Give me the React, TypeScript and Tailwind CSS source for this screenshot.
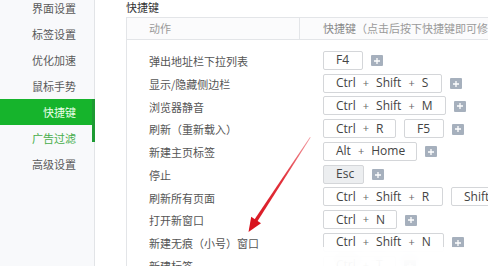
import React from 'react';

const cjk = "font-['Noto_Sans_CJK_SC','Noto_Sans',sans-serif]";
const latin = "font-['Open_Sans','Noto_Sans_CJK_SC',sans-serif]";

const menu = ['界面设置', '标签设置', '优化加速', '鼠标手势', '快捷键', '广告过滤', '高级设置'];

type Key = { parts: string[]; w: string; muted?: boolean };
type Row = { action: string; keys: Key[]; plus: boolean };

const rows: Row[] = [
  { action: '弹出地址栏下拉列表', keys: [{ parts: ['F4'], w: 'w-[40px]' }], plus: true },
  { action: '显示/隐藏侧边栏', keys: [{ parts: ['Ctrl', '+', 'Shift', '+', 'S'], w: 'w-[119px]' }], plus: true },
  { action: '浏览器静音', keys: [{ parts: ['Ctrl', '+', 'Shift', '+', 'M'], w: 'w-[123px]' }], plus: true },
  {
    action: '刷新（重新载入）',
    keys: [
      { parts: ['Ctrl', '+', 'R'], w: 'w-[73px]' },
      { parts: ['F5'], w: 'w-[40px]' },
    ],
    plus: true,
  },
  { action: '新建主页标签', keys: [{ parts: ['Alt', '+', 'Home'], w: 'w-[94px]' }], plus: true },
  { action: '停止', keys: [{ parts: ['Esc'], w: 'w-[41px]', muted: true }], plus: true },
  {
    action: '刷新所有页面',
    keys: [
      { parts: ['Ctrl', '+', 'Shift', '+', 'R'], w: 'w-[120px]' },
      { parts: ['Shift', '+', 'F5'], w: 'w-[100px]' },
    ],
    plus: false,
  },
  { action: '打开新窗口', keys: [{ parts: ['Ctrl', '+', 'N'], w: 'w-[74px]' }], plus: true },
  { action: '新建无痕（小号）窗口', keys: [{ parts: ['Ctrl', '+', 'Shift', '+', 'N'], w: 'w-[121px]' }], plus: true },
  { action: '新建标签', keys: [{ parts: ['Ctrl', '+', 'T'], w: 'w-[73px]' }], plus: true },
];

function PlusButton() {
  return (
    <div className="w-[12px] h-[11px] shrink-0 bg-[#a6b0bd] rounded-[1px] flex items-center justify-center mt-[1px]">
      <svg width="8" height="8" viewBox="0 0 8 8">
        <path d="M4 1v6M1 4h6" stroke="#ffffff" strokeWidth="1.3" />
      </svg>
    </div>
  );
}

function KeyBox({ k }: { k: Key }) {
  return (
    <div
      className={`${k.w} h-[19px] shrink-0 border border-[#d4d6d9] rounded-[2px] pl-[12px] flex items-center gap-[7px] text-[12px] text-[#444] ${latin} ${k.muted ? 'bg-[#eceef0]' : 'bg-white'}`}
    >
      {k.parts.map((p, i) => (
        <span key={i} className={p === '+' ? 'text-[11px] text-[#666]' : ''}>
          {p}
        </span>
      ))}
    </div>
  );
}

export default function App() {
  return (
    <div className="relative w-[488px] h-[266px] overflow-hidden bg-white flex">
      {/* sidebar */}
      <div className={`w-[95px] shrink-0 h-full bg-[#f8f9fb] border-r border-[#e2e4e7] ${cjk}`}>
        <div className="-mt-[5px]">
          {menu.map((m) => {
            const active = m === '快捷键';
            return (
              <div
                key={m}
                className={`relative h-[26px] flex items-center justify-end pr-[18px] text-[11px] ${
                  active ? 'bg-[#16b42c] text-[#eaffea]' : m === '广告过滤' ? 'text-[#47ad4a]' : 'text-[#5a5a5a]'
                }`}
              >
                {m}
                {active && <div className="absolute right-[-1px] top-0 w-[3px] h-[43px] bg-[#1d9b33]" />}
              </div>
            );
          })}
        </div>
      </div>

      {/* main */}
      <div className={`flex-1 pl-[31px] ${cjk}`}>
        <div className="h-[19px] -mt-[2px] flex items-center text-[11px] text-[#333]">快捷键</div>
        <div className="w-[420px] border border-[#e3e5e8]">
          <div className="h-[22px] flex bg-[#fbfbfc] border-b border-[#e3e5e8] text-[11px] text-[#9a9a9a]">
            <div className="w-[173px] shrink-0 border-r border-[#e3e5e8] pl-[22px] flex items-center">动作</div>
            <div className="pl-[23px] flex items-center whitespace-nowrap">
              <span className="text-[#8a8a8a]">快捷键</span>（点击后按下快捷键即可修改）
            </div>
          </div>
          <div className="pt-[9px]">
            {rows.map((r) => (
              <div key={r.action} className="h-[22.75px] flex items-center">
                <div className="w-[173px] shrink-0 pl-[22px] pt-[2px] text-[11px] text-[#555] whitespace-nowrap">
                  {r.action}
                </div>
                <div className="pl-[23px] flex items-center gap-[8px]">
                  {r.keys.map((k, i) => (
                    <KeyBox key={i} k={k} />
                  ))}
                  {r.plus && <PlusButton />}
                </div>
              </div>
            ))}
          </div>
        </div>
      </div>

      {/* washed-out band at bottom right */}
      <div className="absolute left-[317px] top-[247px] w-[171px] h-[19px] bg-white/90 backdrop-blur-sm" />

      {/* red arrow annotation */}
      <svg className="absolute inset-0 pointer-events-none" width="488" height="266" viewBox="0 0 488 266">
        <defs>
          <linearGradient id="arrowRed" x1="310" y1="137" x2="250" y2="230" gradientUnits="userSpaceOnUse">
            <stop offset="0" stopColor="#f29aa0" />
            <stop offset="0.45" stopColor="#e2323c" />
            <stop offset="1" stopColor="#d8141f" />
          </linearGradient>
        </defs>
        <polygon points="310,137 310.6,137.6 257.3,221.6 254.3,219.7" fill="url(#arrowRed)" />
        <polygon points="248.5,232 251.2,216.8 261,223.2" fill="#d8141f" />
      </svg>
    </div>
  );
}
